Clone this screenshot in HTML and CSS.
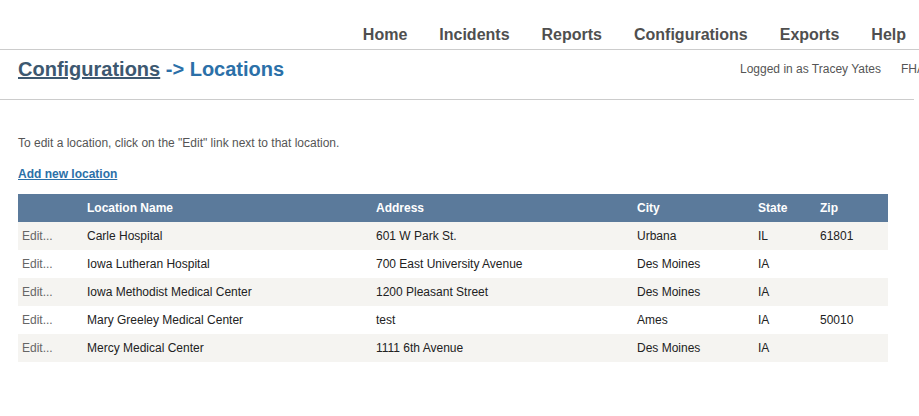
FILE: index.html
```html
<!DOCTYPE html>
<html>
<head>
<meta charset="utf-8">
<title>Locations</title>
<link rel="stylesheet" href="styles.css">
</head>
<body>
<nav class="topnav">
  <a href="#">Home</a>
  <a href="#">Incidents</a>
  <a href="#">Reports</a>
  <a href="#">Configurations</a>
  <a href="#">Exports</a>
  <a href="#">Help</a>
</nav>
<header class="header">
  <h1 class="title"><a href="#" class="crumb">Configurations</a> -&gt; Locations</h1>
  <div class="user">Logged in as Tracey Yates<span class="org">FHA Admin</span></div>
</header>
<main class="content">
  <p class="intro">To edit a location, click on the "Edit" link next to that location.</p>
  <p class="add"><a href="#">Add new location</a></p>
  <table class="grid">
    <colgroup>
      <col class="c1"><col class="c2"><col class="c3"><col class="c4"><col class="c5"><col class="c6">
    </colgroup>
    <thead>
      <tr><th></th><th>Location Name</th><th>Address</th><th>City</th><th>State</th><th>Zip</th></tr>
    </thead>
    <tbody>
      <tr><td class="edit">Edit...</td><td>Carle Hospital</td><td>601 W Park St.</td><td>Urbana</td><td>IL</td><td>61801</td></tr>
      <tr><td class="edit">Edit...</td><td>Iowa Lutheran Hospital</td><td>700 East University Avenue</td><td>Des Moines</td><td>IA</td><td></td></tr>
      <tr><td class="edit">Edit...</td><td>Iowa Methodist Medical Center</td><td>1200 Pleasant Street</td><td>Des Moines</td><td>IA</td><td></td></tr>
      <tr><td class="edit">Edit...</td><td>Mary Greeley Medical Center</td><td>test</td><td>Ames</td><td>IA</td><td>50010</td></tr>
      <tr><td class="edit">Edit...</td><td>Mercy Medical Center</td><td>1111 6th Avenue</td><td>Des Moines</td><td>IA</td><td></td></tr>
    </tbody>
  </table>
</main>
</body>
</html>
```
FILE: styles.css
```css
html, body {
  margin: 0;
  padding: 0;
  overflow: hidden;
  background: #fff;
}
body {
  font-family: "Liberation Sans", Arial, sans-serif;
  font-size: 12px;
  color: #333;
}
.topnav {
  display: flex;
  justify-content: flex-end;
  align-items: center;
  gap: 32px;
  height: 28px;
  padding: 21px 13px 0 0;
  border-bottom: 1px solid #cccccc;
}
.topnav a {
  font-size: 16px;
  font-weight: bold;
  color: #4f4f4f;
  text-decoration: none;
  line-height: 28px;
}
.header {
  display: flex;
  align-items: flex-start;
  height: 49px;
  width: 914px;
  padding: 0;
  border-bottom: 1px solid #cccccc;
}
.title {
  flex: 1;
  margin: 0;
  padding: 7px 0 0 18px;
  font-size: 20px;
  line-height: 24px;
  font-weight: bold;
  color: #2b70a8;
}
.crumb {
  color: #3d5870;
  text-decoration: underline;
}
.user {
  flex: none;
  width: 174px;
  white-space: nowrap;
  padding-top: 11px;
  line-height: 16px;
  font-size: 12px;
  color: #555;
}
.org {
  margin-left: 20px;
}
.content {
  padding: 0 0 0 18px;
}
.intro {
  margin: 35px 0 0 0;
  line-height: 16px;
  color: #555;
}
.add {
  margin: 15px 0 0 0;
  line-height: 16px;
}
.add a {
  font-weight: bold;
  color: #2b70a8;
  text-decoration: underline;
}
.grid {
  margin-top: 12px;
  width: 870px;
  border-collapse: collapse;
  table-layout: fixed;
}
.c1 { width: 65px; }
.c2 { width: 289px; }
.c3 { width: 261px; }
.c4 { width: 121px; }
.c5 { width: 62px; }
.c6 { width: 72px; }
.grid th {
  background: #5b7a9b;
  color: #fff;
  font-weight: bold;
  text-align: left;
  height: 28px;
  padding: 0 0 0 4px;
}
.grid td {
  height: 28px;
  padding: 0 0 0 4px;
  color: #222;
  white-space: nowrap;
}
.grid tbody tr:nth-child(odd) td {
  background: #f5f4f1;
}
.grid td.edit {
  color: #666;
}
```
